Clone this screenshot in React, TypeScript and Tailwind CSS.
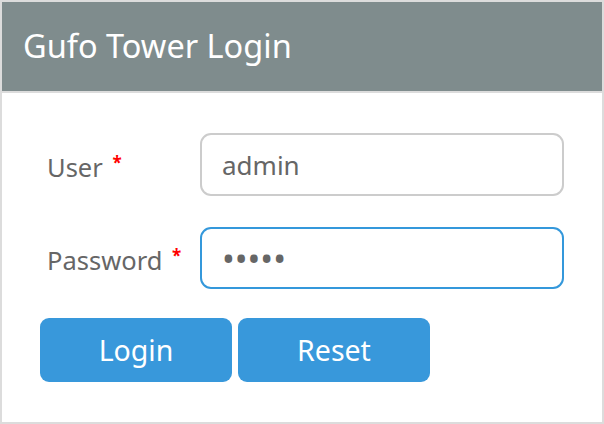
export default function App() {
  return (
    <div
      className="w-[604px] h-[424px] border-2 border-[#dcdcdc] bg-white flex flex-col"
      style={{ fontFamily: '"Noto Sans", "Open Sans", sans-serif' }}
    >
      {/* Header */}
      <div className="h-[91px] shrink-0 bg-[#7f8c8d] border-b-2 border-[#dcdcdc] flex items-center pl-[21px]">
        <h1 className="text-white text-[32.5px] leading-none">Gufo Tower Login</h1>
      </div>

      {/* Form */}
      <form className="flex flex-col pt-[40px] pl-[38px]">
        <div className="flex items-center h-[63px]">
          <label className="w-[160px] pl-[7px] pt-[5px] text-[25.5px] text-[#666]">
            User <span className="text-[#f00] text-[17px] font-bold align-top relative top-[2px] left-[3px]">*</span>
          </label>
          <input
            type="text"
            defaultValue="admin"
            className="w-[364px] h-[63px] rounded-[11px] border-2 border-[#cccccc] px-[20px] text-[26px] text-[#666] outline-none"
          />
        </div>
        <div className="flex items-center h-[63px] mt-[30px]">
          <label className="w-[160px] pl-[7px] pt-[5px] text-[25.5px] text-[#666]">
            Password <span className="text-[#f00] text-[17px] font-bold align-top relative top-[2px] left-[3px]">*</span>
          </label>
          <input
            type="password"
            defaultValue="admin"
            className="w-[364px] h-[62px] rounded-[11px] border-2 border-[#3498db] px-[20px] text-[34px] text-[#666] outline-none"
          />
        </div>
        <div className="flex gap-[6px] mt-[29px]">
          <button type="button" className="w-[192px] h-[64px] rounded-[9px] bg-[#3898db] text-white text-[28.5px]">
            Login
          </button>
          <button type="button" className="w-[192px] h-[64px] rounded-[9px] bg-[#3898db] text-white text-[28.5px]">
            Reset
          </button>
        </div>
      </form>
    </div>
  )
}
